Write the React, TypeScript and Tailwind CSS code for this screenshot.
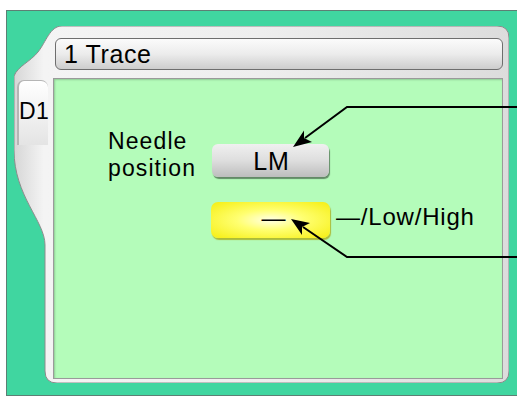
import React from "react";

export default function App() {
  return (
    <div
      className="relative w-[517px] h-[396px] bg-white overflow-hidden"
      style={{ fontFamily: '"Liberation Sans", Arial, sans-serif' }}
    >
      <div className="ml-[6px] mt-[10px] w-[511px] h-[386px] bg-[#40d6a0] border-l border-t border-b border-[#5d7f74]">
        <div className="relative ml-[7px] mt-[15px] w-[495px] h-[357px] flex">
          <svg
            className="absolute inset-0"
            width="495"
            height="357"
            viewBox="0 0 495 357"
          >
            <defs>
              <linearGradient id="silver" x1="0" y1="0" x2="1" y2="0">
                <stop offset="0" stopColor="#d6d6d6" />
                <stop offset="0.06" stopColor="#f4f4f4" />
                <stop offset="0.5" stopColor="#eeeeee" />
                <stop offset="1" stopColor="#dcdcdc" />
              </linearGradient>
            </defs>
            <path
              d="M48,0 L483,0 Q495,0 495,12 L495,345 Q495,357 483,357 L43,357 Q31,357 31,345 L31,219 C31,195 0,170 0,124 L0,50 C4,40 16,36 24,26 C32,16 36,0 48,0 Z"
              fill="url(#silver)"
              stroke="#8c8c8c"
              strokeWidth="1"
            />
          </svg>
          <div className="relative w-[39px] pl-[3px] pt-[54px]">
            <div className="w-[31px] h-[65px] rounded-t-[7px] border-l-2 border-t border-[#b5b5b5] bg-gradient-to-b from-[#ffffff] to-[#e4e4e4] pt-[17px] text-[23px] leading-[26px] tracking-[0.5px] text-black whitespace-nowrap">
              D1
            </div>
          </div>
          <div className="relative flex flex-col pt-[12px] gap-[8px]">
            <div className="ml-[2px] w-[448px] h-[32px] rounded-[6px] border border-[#6e6e6e] bg-gradient-to-b from-[#fbfbfb] via-[#ececec] to-[#cdcdcd] flex items-center pl-[8px] text-[25px] leading-[28px] tracking-[0.6px] text-black">
              1 Trace
            </div>
            <div className="w-[450px] h-[301px] bg-[#b4fcba] border border-[#9a9a9a] shadow-[inset_1px_1px_2px_rgba(0,0,0,0.2)] pt-[49px] pl-[54px] flex flex-col">
              <div className="flex items-start">
                <div className="w-[104px] text-[23px] leading-[27px] tracking-[1.1px] text-black">
                  Needle
                  <br />
                  position
                </div>
                <div className="mt-[16px] w-[117px] h-[33px] rounded-[6px] bg-gradient-to-b from-[#f0f0f0] via-[#dedede] to-[#bdbdbd] shadow-[1px_2px_1px_rgba(0,0,0,0.45)] flex items-center justify-center text-[25px] leading-[26px] tracking-[0.8px] text-black">
                  <span className="ml-[2px]">LM</span>
                </div>
              </div>
              <div className="mt-[20px] pl-[103px] flex items-center gap-[6px]">
                <div className="w-[119px] h-[36px] rounded-[7px] bg-[radial-gradient(ellipse_at_center,#ffffe8_0%,#ffff70_40%,#f5ee10_100%)] shadow-[1px_2px_1px_rgba(170,160,0,0.7)] flex items-center justify-center text-[24px] leading-[26px] text-black">
                  <span className="ml-[6px] -mt-[4px]">—</span>
                </div>
                <div className="text-[24px] leading-[26px] tracking-[0.8px] text-black whitespace-nowrap -mt-[7px]">
                  —/Low/High
                </div>
              </div>
            </div>
          </div>
        </div>
      </div>
      <svg
        className="absolute inset-0 pointer-events-none"
        width="517"
        height="396"
        viewBox="0 0 517 396"
      >
        <polyline
          points="517,107 347,107 305,138"
          fill="none"
          stroke="#000"
          strokeWidth="2"
        />
        <polygon points="293,147 312,142 304,138 304,130.5" fill="#000" />
        <polyline
          points="517,257 347,257 303,227"
          fill="none"
          stroke="#000"
          strokeWidth="2"
        />
        <polygon points="291,219 310,223 302,227 302,235" fill="#000" />
      </svg>
    </div>
  );
}
